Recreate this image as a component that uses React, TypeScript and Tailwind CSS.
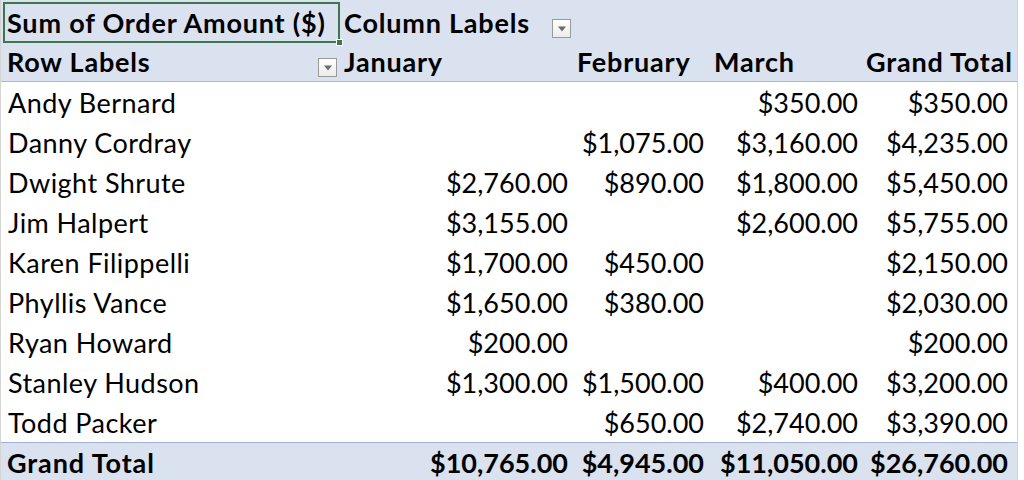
import React from "react";

type Row = { name: string; jan: string; feb: string; mar: string; total: string };

const rows: Row[] = [
  { name: "Andy Bernard", jan: "", feb: "", mar: "$350.00", total: "$350.00" },
  { name: "Danny Cordray", jan: "", feb: "$1,075.00", mar: "$3,160.00", total: "$4,235.00" },
  { name: "Dwight Shrute", jan: "$2,760.00", feb: "$890.00", mar: "$1,800.00", total: "$5,450.00" },
  { name: "Jim Halpert", jan: "$3,155.00", feb: "", mar: "$2,600.00", total: "$5,755.00" },
  { name: "Karen Filippelli", jan: "$1,700.00", feb: "$450.00", mar: "", total: "$2,150.00" },
  { name: "Phyllis Vance", jan: "$1,650.00", feb: "$380.00", mar: "", total: "$2,030.00" },
  { name: "Ryan Howard", jan: "$200.00", feb: "", mar: "", total: "$200.00" },
  { name: "Stanley Hudson", jan: "$1,300.00", feb: "$1,500.00", mar: "$400.00", total: "$3,200.00" },
  { name: "Todd Packer", jan: "", feb: "$650.00", mar: "$2,740.00", total: "$3,390.00" },
];

const cols = "grid grid-cols-[339px_232px_136px_153px_157px]";

function FilterButton() {
  return (
    <span className="mb-[4px] flex h-[19px] w-[19px] shrink-0 items-center justify-center self-end border border-[#9a9a9a] bg-gradient-to-b from-white to-[#ececec]">
      <svg width="10" height="6" viewBox="0 0 10 6">
        <path d="M1 0.5h8L5 5.5z" fill="#6b6b6b" />
      </svg>
    </span>
  );
}

export default function App() {
  return (
    <div className="h-[480px] w-[1024px] overflow-hidden bg-white font-['Lato',sans-serif] text-[27px] leading-none text-black">
      <div className="relative w-[1018px] border-r border-l border-[#d4d4d4]">
        {/* header band */}
        <div className="border-b border-[#aab8d3] bg-[#dae1ef] pt-[2px] font-bold tracking-[0.8px]">
          <div className={`${cols} h-[40px] items-center`}>
            <div className="pl-[6px]">Sum of Order Amount ($)</div>
            <div className="flex h-full items-center justify-between pl-[4px] pr-[1px]">
              <span>Column Labels</span>
              <FilterButton />
            </div>
            <div />
            <div />
            <div />
          </div>
          <div className={`${cols} h-[39px] items-center`}>
            <div className="flex h-full items-center justify-between pl-[6px] pr-[3px]">
              <span>Row Labels</span>
              <FilterButton />
            </div>
            <div className="pl-[4px]">January</div>
            <div className="pl-[5px]">February</div>
            <div className="pl-[6px]">March</div>
            <div className="pl-[5px]">Grand Total</div>
          </div>
        </div>

        {rows.map((r) => (
          <div key={r.name} className={`${cols} h-[40px] items-center`}>
            <div className="pl-[7px] tracking-[0.45px]">{r.name}</div>
            <div className="pr-[4px] text-right">{r.jan}</div>
            <div className="pr-[4px] text-right">{r.feb}</div>
            <div className="pr-[3px] text-right">{r.mar}</div>
            <div className="pr-[10px] text-right">{r.total}</div>
          </div>
        ))}

        <div className={`${cols} h-[40px] items-center border-t border-[#9fb2d4] bg-[#dae1ef] font-bold`}>
          <div className="pl-[6px] tracking-[0.9px]">Grand Total</div>
          <div className="pr-[4px] text-right">$10,765.00</div>
          <div className="pr-[4px] text-right">$4,945.00</div>
          <div className="pr-[3px] text-right">$11,050.00</div>
          <div className="pr-[10px] text-right">$26,760.00</div>
        </div>

        {/* active cell selection */}
        <div className="pointer-events-none absolute top-[2px] left-[2px] h-[41px] w-[337px] border-2 border-[#3f7650]">
          <span className="absolute right-[-5px] bottom-[-5px] h-[7px] w-[7px] border border-white bg-[#3f7650]" />
        </div>
      </div>
    </div>
  );
}
